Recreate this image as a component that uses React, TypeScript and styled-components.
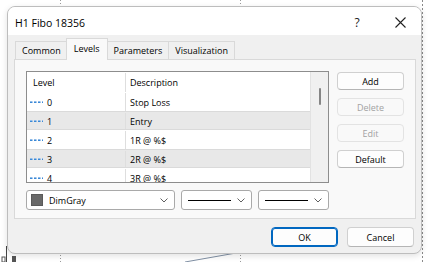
import styled, { createGlobalStyle } from 'styled-components';

const GlobalStyle = createGlobalStyle`
	html, body {
		margin: 0;
		padding: 0;
		background: #fff;
	}
	body {
		font-family: 'Open Sans', 'Noto Sans', sans-serif;
		font-size: 9px;
		color: #000;
	}
`;

const Screen = styled.div`
	position: relative;
	width: 432px;
	height: 262px;
	overflow: hidden;
	background: #fff;
	padding: 6px 0 0 7px;
	box-sizing: border-box;
`;

const Chart = styled.svg`
	position: absolute;
	left: 0;
	top: 0;
`;

const Dialog = styled.div`
	position: relative;
	width: 415px;
	height: 248px;
	box-sizing: border-box;
	border: 1px solid #bdbdbd;
	border-radius: 8px;
	background: #f0f0f0;
	overflow: hidden;
	display: flex;
	flex-direction: column;
	box-shadow: 0 2px 6px rgba(0, 0, 0, 0.12);
`;

const TitleBar = styled.div`
	height: 28px;
	background: #fff;
	display: flex;
	align-items: center;
	padding-left: 7px;
`;

const Title = styled.div`
	flex: 1;
	font-size: 10.5px;
	padding-top: 3px;
`;

const CaptionButton = styled.div<{ $w: number }>`
	width: ${(p) => p.$w}px;
	height: 28px;
	display: flex;
	align-items: center;
	justify-content: center;
	font-size: 12px;
	color: #222;
	padding-top: 2px;
	box-sizing: border-box;
`;

const Body = styled.div`
	flex: 1;
	display: flex;
	flex-direction: column;
	padding: 3px 6px 0 6px;
`;

const TabStrip = styled.div`
	display: flex;
	align-items: flex-end;
	height: 21px;
	padding-left: 1px;
`;

const Tab = styled.div<{ $active?: boolean }>`
	padding: 0 ${(p) => (p.$active ? 7 : 6)}px;
	margin: 0 ${(p) => (p.$active ? -1 : 0)}px;
	box-sizing: border-box;
	display: flex;
	align-items: center;
	justify-content: center;
	border: 1px solid #d9d9d9;
	border-bottom: none;
	margin-right: -1px;
	background: ${(p) => (p.$active ? '#f9f9f9' : '#f0f0f0')};
	position: relative;
	z-index: ${(p) => (p.$active ? 2 : 1)};
	margin-bottom: ${(p) => (p.$active ? -1 : 0)}px;
	padding-bottom: ${(p) => (p.$active ? 3 : 0)}px;
	height: ${(p) => (p.$active ? 22 : 18)}px;
`;

const Panel = styled.div`
	width: 402px;
	height: 160px;
	box-sizing: border-box;
	border: 1px solid #d9d9d9;
	background: #f9f9f9;
	padding: 11px 11px 0 11px;
	display: flex;
	flex-direction: column;
	gap: 7px;
`;

const PanelTop = styled.div`
	display: flex;
	gap: 8px;
`;

const List = styled.div`
	width: 304px;
	height: 112px;
	box-sizing: border-box;
	border: 1px solid #8d8d8d;
	background: #fff;
	display: flex;
	overflow: hidden;
`;

const Grid = styled.div`
	flex: 1;
	display: flex;
	flex-direction: column;
	overflow: hidden;
`;

const Row = styled.div<{ $shade?: boolean; $head?: boolean }>`
	flex: none;
	height: ${(p) => (p.$head ? 20 : 19)}px;
	display: flex;
	align-items: center;
	padding-top: 1px;
	background: ${(p) => (p.$shade ? '#e8e8e8' : '#fff')};
	box-sizing: border-box;
	border-top: ${(p) => (p.$shade ? '1px solid #dadada' : 'none')};
	border-bottom: ${(p) => (p.$shade ? '1px solid #dadada' : 'none')};
`;

const LevelCell = styled.div<{ $head?: boolean }>`
	width: 99px;
	height: 100%;
	display: flex;
	align-items: center;
	gap: 4px;
	padding-left: ${(p) => (p.$head ? 6 : 3)}px;
	box-sizing: border-box;
	border-right: 1px solid #dedede;
`;

const DescCell = styled.div`
	flex: 1;
	padding-left: 4px;
`;

const ScrollTrack = styled.div`
	width: 17px;
	background: #f0f0f0;
	border-left: 1px solid #e2e2e2;
	display: flex;
	justify-content: center;
	padding-top: 16px;
`;

const Thumb = styled.div`
	width: 2px;
	height: 17px;
	border-radius: 1px;
	background: #858585;
`;

const SideButtons = styled.div`
	display: flex;
	flex-direction: column;
	gap: 8px;
	padding-top: 1px;
`;

const Button = styled.div<{ $disabled?: boolean; $primary?: boolean; $h?: number }>`
	width: 67px;
	height: ${(p) => p.$h ?? 18}px;
	box-sizing: border-box;
	display: flex;
	align-items: center;
	justify-content: center;
	border-radius: 4px;
	background: ${(p) => (p.$disabled ? '#f9f9f9' : '#fdfdfd')};
	color: ${(p) => (p.$disabled ? '#a2a2a2' : '#000')};
	border: 1px solid ${(p) => (p.$primary ? '#0067c0' : p.$disabled ? '#e3e3e3' : '#d0d0d0')};
	border-bottom-color: ${(p) => (p.$primary ? '#0067c0' : p.$disabled ? '#e3e3e3' : '#b5b5b5')};
	box-shadow: ${(p) => (p.$primary ? 'inset 0 0 0 1px #0067c0' : 'none')};
`;

const ComboRow = styled.div`
	display: flex;
	gap: 6px;
`;

const Combo = styled.div<{ $w: number }>`
	width: ${(p) => p.$w}px;
	height: 20px;
	box-sizing: border-box;
	border: 1px solid #a9a9a9;
	border-radius: 3px;
	background: #fff;
	display: flex;
	align-items: center;
	padding: 0 6px 0 4px;
	gap: 6px;
`;

const Swatch = styled.div`
	width: 12px;
	height: 12px;
	background: #696969;
	border: 1px solid #5a5a5a;
	box-sizing: border-box;
`;

const ComboText = styled.div`
	flex: 1;
`;

const LineSample = styled.div`
	flex: 1;
	height: 1px;
	background: #000;
	margin-left: 2px;
`;

const Footer = styled.div`
	display: flex;
	justify-content: flex-end;
	gap: 9px;
	padding-top: 8px;
	padding-right: 1px;
`;

function LevelIcon() {
	return (
		<svg width="13" height="4" viewBox="0 0 13 4">
			<line x1="0" y1="1.5" x2="13" y2="1.5" stroke="#8fbbe8" strokeWidth="1" strokeDasharray="2.5 1.5" />
			<line x1="0" y1="2.5" x2="13" y2="2.5" stroke="#3a88d6" strokeWidth="1" strokeDasharray="2.5 1.5" />
		</svg>
	);
}

function Chevron() {
	return (
		<svg width="8" height="5" viewBox="0 0 8 5">
			<path d="M0.5 0.5 L4 4 L7.5 0.5" fill="none" stroke="#606060" strokeWidth="1" />
		</svg>
	);
}

const levels = [
	{ level: '0', desc: 'Stop Loss' },
	{ level: '1', desc: 'Entry' },
	{ level: '2', desc: '1R @ %$' },
	{ level: '3', desc: '2R @ %$' },
	{ level: '4', desc: '3R @ %$' },
];

export default function App() {
	return (
		<>
			<GlobalStyle />
			<Screen>
				<Chart width="432" height="262">
					<line x1="60.5" y1="0" x2="60.5" y2="262" stroke="#9a9a9a" strokeDasharray="1 2" />
					<line x1="240.5" y1="0" x2="240.5" y2="262" stroke="#9a9a9a" strokeDasharray="1 2" />
					<line x1="422.5" y1="0" x2="422.5" y2="262" stroke="#8a8a8a" strokeDasharray="2 2" />
					<line x1="185" y1="262" x2="236" y2="253" stroke="#8090a4" strokeWidth="1" />
					<line x1="6.5" y1="246" x2="6.5" y2="262" stroke="#444" />
					<rect x="2" y="257" width="3" height="5" fill="none" stroke="#555" />
					<rect x="12" y="256" width="4" height="6" fill="#555" />
				</Chart>
				<Dialog>
					<TitleBar>
						<Title>H1 Fibo 18356</Title>
						<CaptionButton $w={44}>?</CaptionButton>
						<CaptionButton $w={42}>
							<svg width="11" height="11" viewBox="0 0 11 11">
								<path d="M0.5 0.5 L10.5 10.5 M10.5 0.5 L0.5 10.5" stroke="#222" strokeWidth="1.1" />
							</svg>
						</CaptionButton>
					</TitleBar>
					<Body>
						<TabStrip>
							<Tab>Common</Tab>
							<Tab $active>Levels</Tab>
							<Tab>Parameters</Tab>
							<Tab>Visualization</Tab>
						</TabStrip>
						<Panel>
							<PanelTop>
								<List>
									<Grid>
										<Row $head>
											<LevelCell $head>Level</LevelCell>
											<DescCell>Description</DescCell>
										</Row>
										{levels.map((item, i) => (
											<Row key={item.level} $shade={i % 2 === 1}>
												<LevelCell>
													<LevelIcon />
													<span>{item.level}</span>
												</LevelCell>
												<DescCell>{item.desc}</DescCell>
											</Row>
										))}
									</Grid>
									<ScrollTrack>
										<Thumb />
									</ScrollTrack>
								</List>
								<SideButtons>
									<Button>Add</Button>
									<Button $disabled>Delete</Button>
									<Button $disabled>Edit</Button>
									<Button>Default</Button>
								</SideButtons>
							</PanelTop>
							<ComboRow>
								<Combo $w={149}>
									<Swatch />
									<ComboText>DimGray</ComboText>
									<Chevron />
								</Combo>
								<Combo $w={71}>
									<LineSample />
									<Chevron />
								</Combo>
								<Combo $w={71}>
									<LineSample />
									<Chevron />
								</Combo>
							</ComboRow>
						</Panel>
						<Footer>
							<Button $primary $h={20}>OK</Button>
							<Button $h={20}>Cancel</Button>
						</Footer>
					</Body>
				</Dialog>
			</Screen>
		</>
	);
}
